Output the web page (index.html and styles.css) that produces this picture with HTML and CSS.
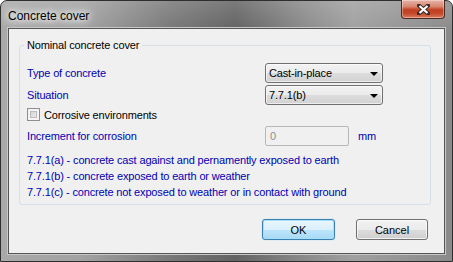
FILE: index.html
```html
<!DOCTYPE html>
<html lang="en">
<head>
    <meta charset="UTF-8">
    <title>Concrete cover</title>
    <link rel="stylesheet" href="styles.css">
</head>
<body>
    <div class="window">
        <div class="title-bar">
            <span class="title">Concrete cover</span>
            <div class="close-btn">
                <svg width="13" height="11" viewBox="0 0 13 11">
                    <path d="M2 1.5 L11 9.5 M11 1.5 L2 9.5" stroke="#3b2a26" stroke-width="4" stroke-linecap="square"/>
                    <path d="M2.5 2 L10.5 9 M10.5 2 L2.5 9" stroke="#ffffff" stroke-width="2.2"/>
                </svg>
            </div>
        </div>

        <div class="client">
            <fieldset class="group">
                <legend>Nominal concrete cover</legend>

                <div class="row row-combo">
                    <span class="label">Type of concrete</span>
                    <div class="combo"><span>Cast-in-place</span><i class="arrow"></i></div>
                </div>
                <div class="row row-combo">
                    <span class="label">Situation</span>
                    <div class="combo"><span>7.7.1(b)</span><i class="arrow"></i></div>
                </div>
                <div class="row row-check">
                    <span class="checkbox"></span>
                    <span class="check-text">Corrosive environments</span>
                </div>
                <div class="row row-input">
                    <span class="label">Increment for corrosion</span>
                    <div class="textbox">0</div>
                    <span class="unit">mm</span>
                </div>

                <div class="notes">
                    <div>7.7.1(a) - concrete cast against and pernamently exposed to earth</div>
                    <div>7.7.1(b) - concrete exposed to earth or weather</div>
                    <div>7.7.1(c) - concrete not exposed to weather or in contact with ground</div>
                </div>
            </fieldset>

            <div class="buttons">
                <button class="btn btn-default">OK</button>
                <button class="btn btn-cancel">Cancel</button>
            </div>
        </div>
    </div>
</body>
</html>
```

FILE: styles.css
```css
body {
    margin: 0;
    padding: 0;
    font-family: 'Liberation Sans', Arial, sans-serif;
    font-size: 11px;
    letter-spacing: -0.15px;
    background: #ffffff;
}

.window {
    width: 453px;
    height: 262px;
    box-sizing: border-box;
    padding: 0 7px 7px 7px;
    display: flex;
    flex-direction: column;
    border: 1px solid #2e2e2e;
    border-radius: 7px 7px 0 0;
    background:
        linear-gradient(to bottom, rgba(255, 255, 255, 0.15), rgba(0, 0, 0, 0) 30px),
        linear-gradient(to right, #a9a9a9 0%, #a2a2a2 18%, #777777 38%, #636363 52%, #8c8c8c 68%, #a0a0a0 78%, #8a8a8a 100%);
}

.title-bar {
    height: 27px;
    display: flex;
    justify-content: space-between;
    align-items: flex-start;
}

.title {
    font-size: 12px;
    letter-spacing: 0;
    color: #000000;
    margin-top: 8px;
    text-shadow: 0 0 6px #ffffff, 0 0 10px #ffffff, 0 0 12px #ffffff;
}

.close-btn {
    width: 44px;
    height: 19px;
    margin-top: -1px;
    box-sizing: border-box;
    border: 1px solid #4a2a22;
    border-top: none;
    border-radius: 0 0 4px 4px;
    background: linear-gradient(to bottom, #e6b3a6 0%, #d88a74 35%, #c23e22 55%, #c4492c 75%, #dd7a5d 100%);
    box-shadow: inset 0 0 0 1px rgba(255, 255, 255, 0.35);
    display: flex;
    align-items: center;
    justify-content: center;
}

.client {
    flex: 1;
    background: #f0f0f0;
    border: 1px solid #555555;
    box-shadow: 0 0 0 1px #c8c8c8;
    display: flex;
    flex-direction: column;
}

.group {
    margin: 10px 13px 0 10px;
    padding: 11px 0 4px 4px;
    border: 1px solid #d5dfe5;
    border-radius: 3px;
    min-width: 0;
}

.group legend {
    padding: 0 3px;
    line-height: 13px;
    color: #000000;
}

.row {
    display: flex;
    align-items: center;
    padding-left: 3px;
}

.row-combo {
    height: 20px;
    margin-bottom: 2px;
}

.row-check {
    height: 13px;
    margin-top: 3px;
}

.row-input {
    height: 20px;
    margin-top: 5px;
}

.label {
    width: 238px;
    color: #0000b4;
}

.combo {
    width: 118px;
    height: 20px;
    box-sizing: border-box;
    border: 1px solid #707070;
    border-radius: 3px;
    background: linear-gradient(to bottom, #f3f3f3 0%, #ebebeb 50%, #dddddd 51%, #d2d2d2 100%);
    box-shadow: inset 0 0 0 1px rgba(255, 255, 255, 0.6);
    display: flex;
    align-items: center;
    justify-content: space-between;
    padding: 0 4px 0 3px;
    color: #000000;
}

.arrow {
    width: 0;
    height: 0;
    border-left: 4px solid transparent;
    border-right: 4px solid transparent;
    border-top: 4px solid #000000;
    margin-top: 1px;
}

.checkbox {
    width: 13px;
    height: 13px;
    box-sizing: border-box;
    border: 1px solid #8f8f8f;
    background: linear-gradient(135deg, #cbcbcb, #f4f4f4);
    box-shadow: inset 0 0 0 2px #f4f4f4, inset 0 0 0 3px #bdbdbd;
    margin-right: 4px;
}

.check-text {
    color: #000000;
}

.textbox {
    width: 84px;
    height: 20px;
    box-sizing: border-box;
    border: 1px solid #b5b8bb;
    border-radius: 2px;
    background: #f0f0f0;
    color: #8d8d8d;
    padding-left: 4px;
    display: flex;
    align-items: center;
}

.unit {
    color: #0000b4;
    margin-left: 9px;
}

.notes {
    margin-top: 6px;
    padding-left: 3px;
    line-height: 16px;
    color: #0000b4;
}

.buttons {
    display: flex;
    justify-content: flex-end;
    gap: 21px;
    margin: 14px 16px 0 0;
}

.btn {
    height: 21px;
    box-sizing: border-box;
    border-radius: 3px;
    font-family: 'Liberation Sans', Arial, sans-serif;
    font-size: 11px;
    color: #000000;
    padding: 0;
}

.btn-default {
    width: 73px;
    border: 1px solid #3c7fb1;
    background: linear-gradient(to bottom, #eaf6fd 0%, #d9f0fc 50%, #bee6fd 51%, #a7d9f5 100%);
    box-shadow: inset 0 0 0 1px #a4e0fb, 0 0 1px #5fc7f0;
}

.btn-cancel {
    width: 72px;
    border: 1px solid #707070;
    background: linear-gradient(to bottom, #f2f2f2 0%, #ebebeb 50%, #dddddd 51%, #cfcfcf 100%);
    box-shadow: inset 0 0 0 1px rgba(255, 255, 255, 0.7);
}
```
